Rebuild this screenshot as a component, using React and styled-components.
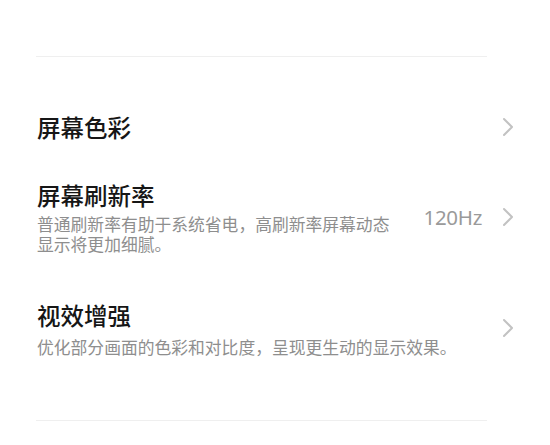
import React from "react";
import styled, { createGlobalStyle } from "styled-components";

const Global = createGlobalStyle`
  body {
    margin: 0;
    background: #fff;
    font-family: "Noto Sans CJK SC", "Noto Sans", sans-serif;
  }
`;

const items = [
  { title: "屏幕色彩", top: 54, bottom: 18 },
  {
    title: "屏幕刷新率",
    desc: "普通刷新率有助于系统省电，高刷新率屏幕动态显示将更加细腻。",
    value: "120Hz",
    top: 18,
    bottom: 23,
    gap: 3,
    width: 360,
  },
  {
    title: "视效增强",
    desc: "优化部分画面的色彩和对比度，呈现更生动的显示效果。",
    top: 22,
    bottom: 63,
    gap: 6,
    width: 440,
  },
];

const Chevron = () => (
  <svg width="12" height="20" viewBox="0 0 12 20">
    <polyline
      points="2,2 10,10 2,18"
      fill="none"
      stroke="#c2c2c2"
      strokeWidth="2"
      strokeLinecap="round"
      strokeLinejoin="round"
    />
  </svg>
);

const App = () => {
  return (
    <Page>
      <Global />
      <Divider />
      {items.map((it) => (
        <Row key={it.title} $top={it.top} $bottom={it.bottom}>
          <Texts>
            <Title>{it.title}</Title>
            {it.desc && (
              <Desc $gap={it.gap} $width={it.width}>
                {it.desc}
              </Desc>
            )}
          </Texts>
          <Side>
            {it.value && <Value>{it.value}</Value>}
            <Chevron />
          </Side>
        </Row>
      ))}
      <Divider />
    </Page>
  );
};

export default App;

const Page = styled.div`
  width: 550px;
  height: 445px;
  padding: 56px 37px 0 37px;
  box-sizing: border-box;
  overflow: hidden;
`;

const Divider = styled.div`
  height: 1px;
  margin-right: 26px;
  margin-left: -1px;
  background: #efefef;
`;

const Row = styled.div`
  display: flex;
  align-items: center;
  justify-content: space-between;
  padding-top: ${(p) => p.$top}px;
  padding-bottom: ${(p) => p.$bottom}px;
`;

const Texts = styled.div`
  display: flex;
  flex-direction: column;
`;

const Title = styled.div`
  font-size: 23.5px;
  font-weight: 500;
  line-height: 32px;
  color: #161616;
`;

const Desc = styled.div`
  margin-top: ${(p) => p.$gap}px;
  width: ${(p) => p.$width}px;
  font-size: 16.8px;
  line-height: 20px;
  color: #8e8e8e;
`;

const Side = styled.div`
  display: flex;
  align-items: center;
  gap: 20px;
  margin-right: -1px;
`;

const Value = styled.span`
  font-family: "Noto Sans", sans-serif;
  font-size: 20.5px;
  color: #9a9a9a;
  letter-spacing: -0.3px;
`;
